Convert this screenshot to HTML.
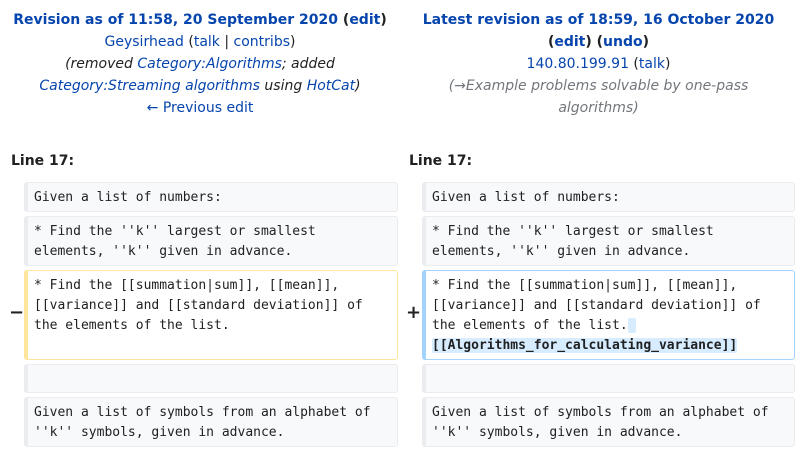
<!DOCTYPE html>
<html><head><meta charset="utf-8"><style>
body{margin:0;width:799px;height:451px;background:#fff;font-family:"DejaVu Sans","Liberation Sans",sans-serif;font-size:14px;color:#202122;position:relative;overflow:hidden}
a{color:#0645ad;text-decoration:none}
.hd{position:absolute;top:9px;text-align:center;line-height:22px}
.gray{color:#72777d}
.gray a{color:#72777d}
.ln{position:absolute;top:153px;font-weight:bold;font-size:14px}
.box{position:absolute;background:#f8f9fa;border:1px solid #eaecf0;border-left:4px solid #eaecf0;border-radius:3px;box-sizing:border-box;font-family:"DejaVu Sans Mono","Liberation Mono",monospace;font-size:13px;line-height:20px;padding:5px 6px 4px;white-space:pre;color:#202122}
.del{background:#fff;border-color:#ffe49c}
.add{background:#fff;border-color:#a3d3ff}
.hl{background:#d8ecff;font-weight:bold;border-radius:2px}
.mk{position:absolute;font-weight:bold;font-size:18px}
</style></head><body>
<div class="hd" style="left:0;width:400px"><b><a>Revision as of 11:58, 20 September 2020</a> (<a>edit</a>)</b><br><a>Geysirhead</a> (<a>talk</a> | <a>contribs</a>)<br><i>(removed <a>Category:Algorithms</a>; added<br><a>Category:Streaming algorithms</a> using <a>HotCat</a>)</i><br><a>← Previous edit</a></div>
<div class="hd" style="left:398px;width:401px"><b><a>Latest revision as of 18:59, 16 October 2020</a><br>(<a>edit</a>) (<a>undo</a>)</b><br><a>140.80.199.91</a> (<a>talk</a>)<br><i class="gray">(<a>→</a>Example problems solvable by one-pass<br>algorithms)</i></div>
<div class="ln" style="left:11px">Line 17:</div>
<div class="ln" style="left:409px">Line 17:</div>

<div class="box" style="left:24px;top:182px;width:374px;height:30px">Given a list of numbers:</div>
<div class="box" style="left:24px;top:216px;width:374px;height:50px">* Find the ''k'' largest or smallest
elements, ''k'' given in advance.</div>
<div class="mk" style="left:9px;top:302px">−</div>
<div class="box del" style="left:24px;top:270px;width:374px;height:90px">* Find the [[summation|sum]], [[mean]],
[[variance]] and [[standard deviation]] of
the elements of the list.</div>
<div class="box" style="left:24px;top:364px;width:374px;height:29px"></div>
<div class="box" style="left:24px;top:397px;width:374px;height:50px">Given a list of symbols from an alphabet of
''k'' symbols, given in advance.</div>

<div class="box" style="left:422px;top:182px;width:373px;height:30px">Given a list of numbers:</div>
<div class="box" style="left:422px;top:216px;width:373px;height:50px">* Find the ''k'' largest or smallest
elements, ''k'' given in advance.</div>
<div class="mk" style="left:406px;top:302px">+</div>
<div class="box add" style="left:422px;top:270px;width:373px;height:90px">* Find the [[summation|sum]], [[mean]],
[[variance]] and [[standard deviation]] of
the elements of the list.<span class="hl"> </span>
<span class="hl">[[Algorithms_for_calculating_variance]]</span></div>
<div class="box" style="left:422px;top:364px;width:373px;height:29px"></div>
<div class="box" style="left:422px;top:397px;width:373px;height:50px">Given a list of symbols from an alphabet of
''k'' symbols, given in advance.</div>
</body></html>
